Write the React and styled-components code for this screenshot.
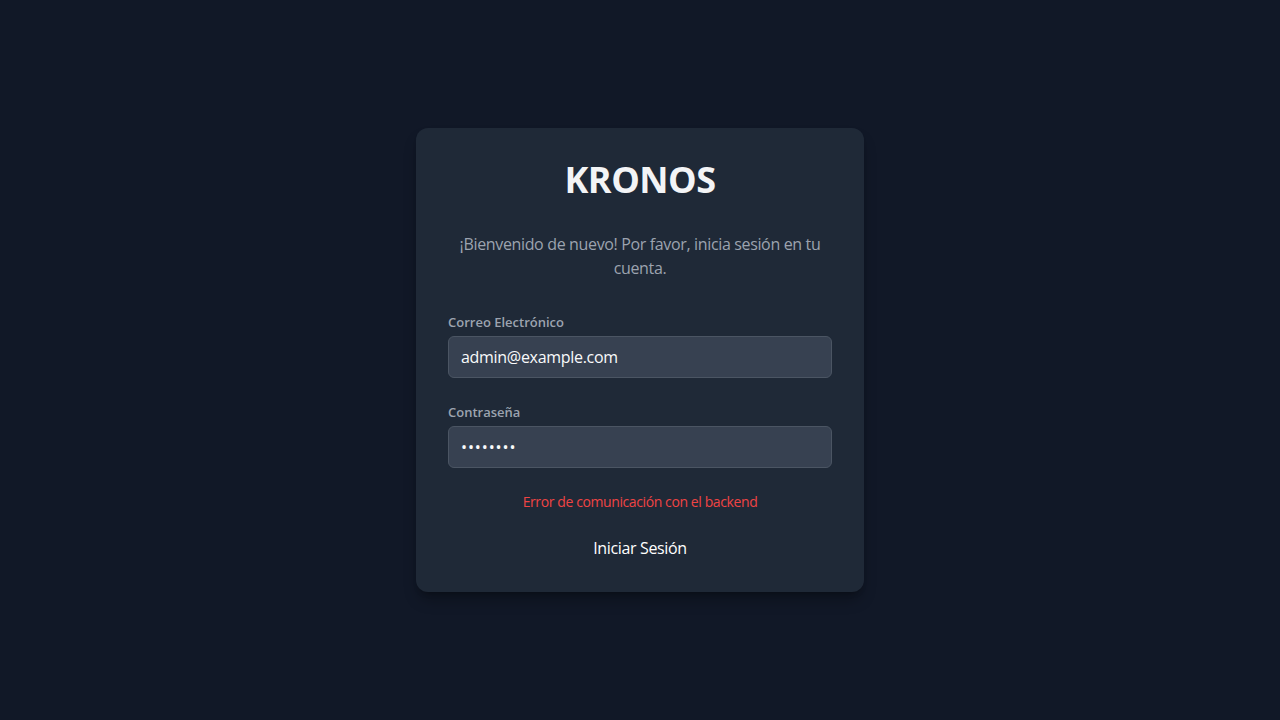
import React from 'react'
import styled, { createGlobalStyle } from 'styled-components'

const GlobalStyle = createGlobalStyle`
  html, body {
    margin: 0;
    padding: 0;
    background: #111827;
  }

  body {
    font-family: 'Open Sans', 'Noto Sans', sans-serif;
    -webkit-font-smoothing: antialiased;
  }

  * {
    box-sizing: border-box;
  }
`

const Page = styled.main`
  min-height: 100vh;
  display: flex;
  align-items: center;
  justify-content: center;
  background: #111827;
`

const Card = styled.form`
  width: 448px;
  padding: 32px 32px 24px;
  background: #1f2937;
  border-radius: 12px;
  box-shadow: 0 10px 15px -3px rgba(0, 0, 0, 0.3), 0 4px 6px -4px rgba(0, 0, 0, 0.3);
  display: flex;
  flex-direction: column;
`

const Title = styled.h1`
  margin: 0 0 32px;
  font-size: 36px;
  line-height: 40px;
  font-weight: 700;
  text-align: center;
  color: #f3f4f6;
  letter-spacing: -0.5px;
`

const Subtitle = styled.p`
  margin: 0 0 32px;
  font-size: 16px;
  line-height: 24px;
  color: #9ca3af;
  text-align: center;
  letter-spacing: -0.35px;
`

const Field = styled.div`
  display: flex;
  flex-direction: column;
  margin-bottom: 24px;
`

const Label = styled.label`
  margin-bottom: 4px;
  font-size: 13px;
  line-height: 20px;
  font-weight: 600;
  color: #9ca3af;
`

const Input = styled.input`
  height: 42px;
  padding: 8px 12px;
  font-family: inherit;
  font-size: 16px;
  line-height: 24px;
  color: #f9fafb;
  background: #374151;
  border: 1px solid #4b5563;
  border-radius: 6px;
  outline: none;
  letter-spacing: ${(p) => (p.type === 'password' ? '0.9px' : '-0.3px')};
`

const ErrorText = styled.p`
  margin: 0 0 16px;
  font-size: 14px;
  line-height: 20px;
  color: #ef4444;
  text-align: center;
  letter-spacing: -0.4px;
`

const SubmitButton = styled.button`
  padding: 8px 0;
  font-family: inherit;
  font-size: 16px;
  line-height: 24px;
  color: #ffffff;
  background: transparent;
  border: none;
  cursor: pointer;
  letter-spacing: -0.35px;
`

const App = () => (
  <>
    <GlobalStyle />
    <Page>
      <Card onSubmit={(e) => e.preventDefault()}>
        <Title>KRONOS</Title>
        <Subtitle>¡Bienvenido de nuevo! Por favor, inicia sesión en tu cuenta.</Subtitle>

        <Field>
          <Label htmlFor='email'>Correo Electrónico</Label>
          <Input id='email' type='email' defaultValue='admin@example.com' />
        </Field>

        <Field>
          <Label htmlFor='password'>Contraseña</Label>
          <Input id='password' type='password' defaultValue='password' />
        </Field>

        <ErrorText>Error de comunicación con el backend</ErrorText>
        <SubmitButton type='submit'>Iniciar Sesión</SubmitButton>
      </Card>
    </Page>
  </>
)

export default App
